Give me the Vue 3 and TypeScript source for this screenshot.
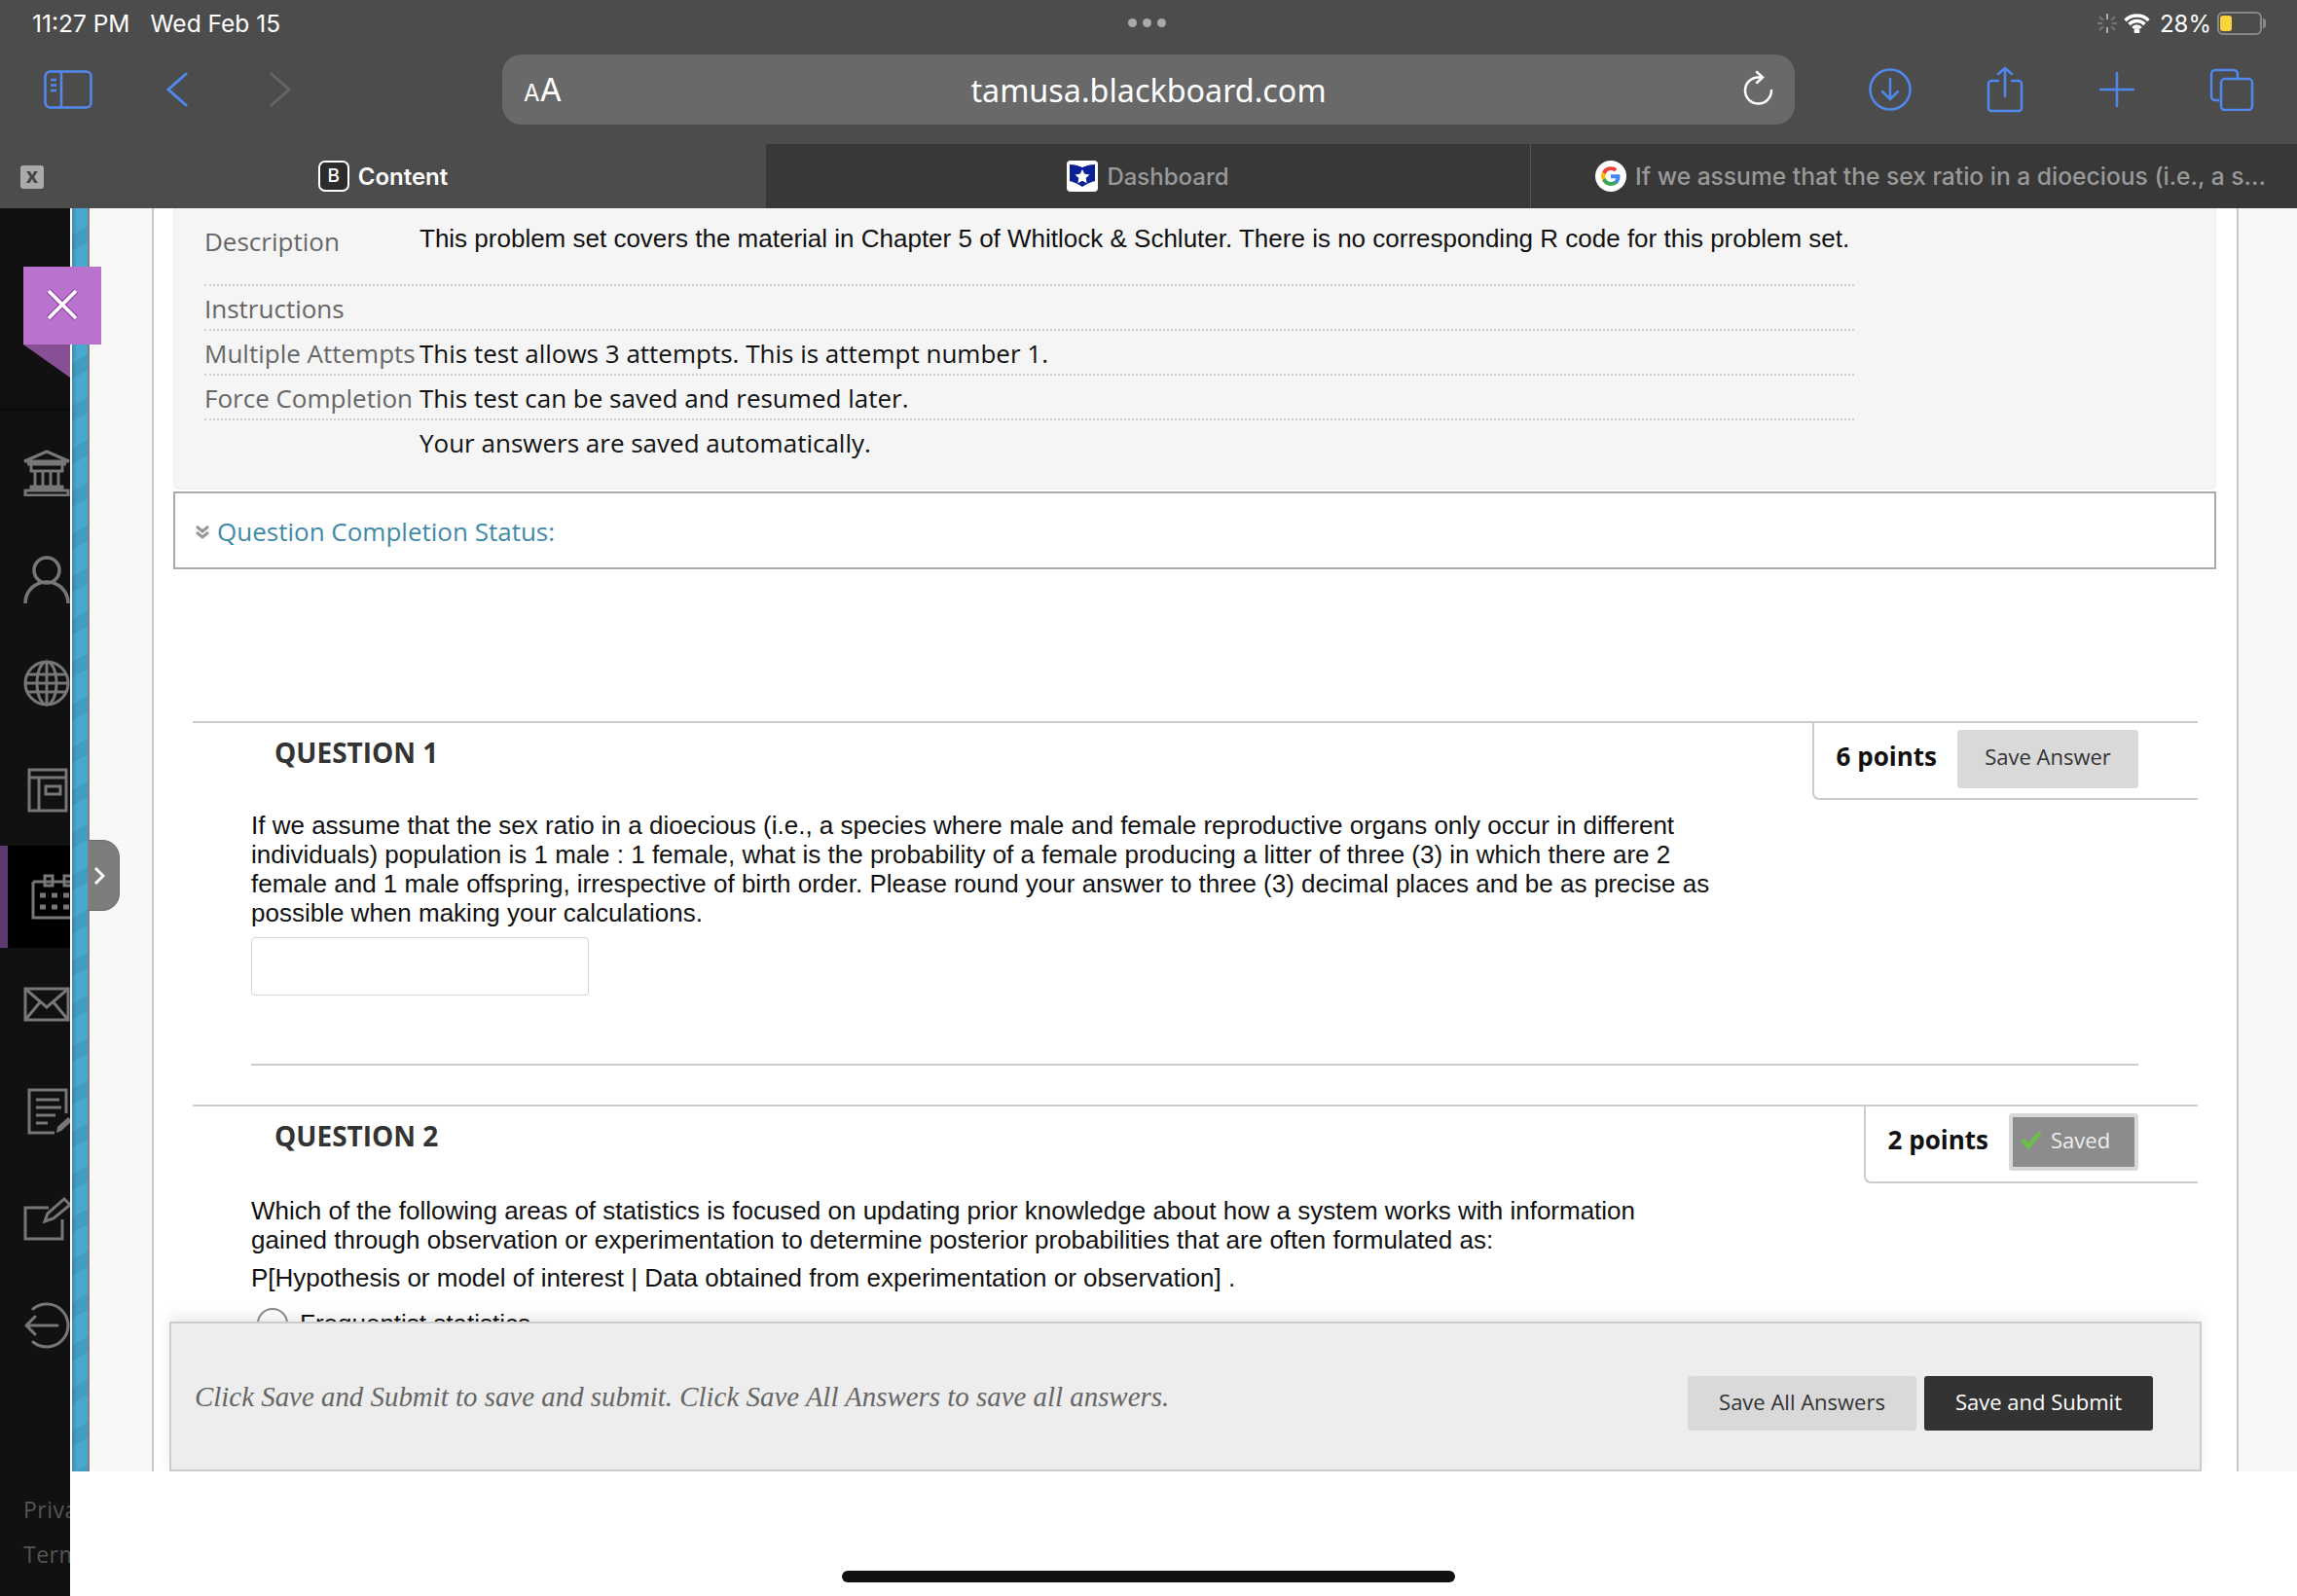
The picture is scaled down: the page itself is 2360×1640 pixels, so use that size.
<script setup lang="ts">
const rows = [
  { label: 'Description', value: 'This problem set covers the material in Chapter 5 of Whitlock & Schluter. There is no corresponding R code for this problem set.', cls: 'first' },
  { label: 'Instructions', value: '', cls: '' },
  { label: 'Multiple Attempts', value: 'This test allows 3 attempts. This is attempt number 1.', cls: '' },
  { label: 'Force Completion', value: 'This test can be saved and resumed later.', cls: '' },
  { label: '', value: 'Your answers are saved automatically.', cls: 'last' }
]
</script>

<template>
  <div class="app">
    <header class="chrome">
      <div class="status">
        <span class="time">11:27 PM</span>
        <span class="date">Wed Feb 15</span>
        <span class="dots"><i></i><i></i><i></i></span>
        <span class="status-right">
          <svg class="spin" width="20" height="22" viewBox="0 0 20 22" stroke="#aaa" stroke-width="2">
            <path d="M10 1v6M10 15v6" /><path d="M2 4l4 4M14 14l4 4M18 4l-4 4M6 14l-4 4M0 11h5M15 11h5" stroke="#777" />
          </svg>
          <svg class="wifi" width="27" height="20" viewBox="0 0 27 20" fill="none" stroke="#fff" stroke-width="3.500">
            <path d="M1.500 7a17 17 0 0 1 24 0M5.500 11a11 11 0 0 1 16 0M9.500 15a5 5 0 0 1 8 0" />
            <circle cx="13.500" cy="18" r="1.200" fill="#fff" />
          </svg>
          <span class="pct">28%</span>
          <span class="battery"><b></b></span>
          <span class="nub"></span>
        </span>
      </div>
      <div class="toolbar">
        <svg class="ic-side" width="50" height="40" viewBox="0 0 50 40" fill="none" stroke="#5188ee" stroke-width="2.500">
          <rect x="1.500" y="1.500" width="47" height="37" rx="5" />
          <path d="M18 2v36" /><path d="M7 10h6M7 15.500h6M7 21h6" />
        </svg>
        <svg class="ic-back" width="22" height="36" viewBox="0 0 22 36" fill="none" stroke="#5188ee" stroke-width="3" stroke-linecap="round">
          <path d="M20 2L2 18l18 16" />
        </svg>
        <svg class="ic-fwd" width="22" height="36" viewBox="0 0 22 36" fill="none" stroke="#666" stroke-width="3" stroke-linecap="round">
          <path d="M2 2l18 16L2 34" />
        </svg>
        <div class="urlbar">
          <span class="aa"><small>A</small>A</span>
          <span class="url">tamusa.blackboard.com</span>
          <svg class="reload" width="32" height="38" viewBox="0 0 32 38" fill="none" stroke="#fff" stroke-width="2.500" stroke-linecap="round">
            <path d="M29 21a13.500 13.500 0 1 1-13.500-13.500h3" /><path d="M14 2l6 5.500-6 5.500" />
          </svg>
        </div>
        <svg class="ic-dl" width="44" height="44" viewBox="0 0 44 44" fill="none" stroke="#5188ee" stroke-width="2.500" stroke-linecap="round">
          <circle cx="22" cy="22" r="20.500" /><path d="M22 11v21M14 24l8 8 8-8" />
        </svg>
        <svg class="ic-share" width="38" height="48" viewBox="0 0 38 48" fill="none" stroke="#5188ee" stroke-width="2.500" stroke-linecap="round">
          <path d="M12 15H5a3 3 0 0 0-3 3v25a3 3 0 0 0 3 3h28a3 3 0 0 0 3-3V18a3 3 0 0 0-3-3h-7" /><path d="M19 31V2M12 8l7-6 7 6" />
        </svg>
        <svg class="ic-plus" width="36" height="36" viewBox="0 0 36 36" stroke="#5188ee" stroke-width="2.500" stroke-linecap="round">
          <path d="M18 1v34M1 18h34" />
        </svg>
        <svg class="ic-tabs" width="46" height="44" viewBox="0 0 46 44" fill="none" stroke="#5188ee" stroke-width="2.500">
          <path d="M10 33H6a4 4 0 0 1-4-4V6a4 4 0 0 1 4-4h19a4 4 0 0 1 4 4v4" />
          <rect x="12" y="11" width="32" height="32" rx="4" />
        </svg>
      </div>
      <div class="tabs">
        <div class="tab active">
          <span class="tab-x">x</span>
          <span class="fav-b">B</span>
          <span class="tab-title">Content</span>
        </div>
        <div class="tab mid">
          <svg class="fav" width="32" height="32" viewBox="0 0 32 32">
            <rect width="32" height="32" rx="4" fill="#fff" />
            <path d="M3 4c4 0 9 1 13 3 4-2 9-3 13-3v17c-4 1-9 3-13 6-4-3-9-5-13-6z" fill="#0b1f96" />
            <path d="M16 9l2.300 4.800 5.200.700-3.800 3.600.9 5.200-4.600-2.500-4.600 2.500.9-5.200-3.800-3.600 5.200-.700z" fill="#fff" />
          </svg>
          <span class="tab-title dim">Dashboard</span>
        </div>
        <div class="tab last">
          <svg class="fav" width="32" height="32" viewBox="0 0 32 32">
            <circle cx="16" cy="16" r="16" fill="#fff" />
            <path d="M25.500 16.300c0-.7-.1-1.400-.2-2H16v3.900h5.300a4.500 4.500 0 0 1-2 3v2.500h3.200c1.900-1.700 3-4.300 3-7.400z" fill="#4285f4" />
            <path d="M16 26c2.700 0 4.900-.9 6.500-2.400l-3.200-2.500c-.9.600-2 .9-3.300.9-2.500 0-4.700-1.700-5.500-4H7.200v2.600A10 10 0 0 0 16 26z" fill="#34a853" />
            <path d="M10.500 18c-.2-.6-.3-1.300-.3-2s.1-1.400.3-2v-2.600H7.200a10 10 0 0 0 0 9.200z" fill="#fbbc05" />
            <path d="M16 10c1.400 0 2.700.5 3.700 1.400l2.800-2.800A10 10 0 0 0 7.200 11.400l3.300 2.600c.8-2.300 3-4 5.500-4z" fill="#ea4335" />
          </svg>
          <span class="tab-title dim long">If we assume that the sex ratio in a dioecious (i.e., a s...</span>
        </div>
      </div>
    </header>

    <div class="body">
      <aside class="rail">
        <div class="rail-top"></div>
        <nav class="rail-nav">
          <div class="rail-item">
            <svg width="48" height="48" viewBox="0 0 48 48" fill="none" stroke="#777" stroke-width="3">
              <path d="M1 12L24 2l23 10zM4 15h40M8 16v6h32v-6M12 22v16M20 22v16M28 22v16M36 22v16M8 38h32v3H8zM2 42h44v5H2z" />
            </svg>
          </div>
          <div class="rail-item">
            <svg width="48" height="50" viewBox="0 0 48 50" fill="none" stroke="#777" stroke-width="3.500">
              <circle cx="24" cy="15" r="13" /><path d="M2 49c0-13 10-22 22-22s22 9 22 22" />
            </svg>
          </div>
          <div class="rail-item globe">
            <svg width="48" height="48" viewBox="0 0 48 48" fill="none" stroke="#777" stroke-width="3">
              <circle cx="24" cy="24" r="22" /><ellipse cx="24" cy="24" rx="10" ry="22" /><path d="M24 2v44M4 15h40M2 24h44M4 33h40" />
            </svg>
          </div>
          <div class="rail-item">
            <svg class="ml4" width="42" height="46" viewBox="0 0 42 46" fill="none" stroke="#777" stroke-width="3">
              <path d="M2 2h38v42H2zM2 10h38M12 10v34M19 19h15v8H19z" />
            </svg>
          </div>
          <div class="rail-item active">
            <svg class="ml8" width="48" height="47" viewBox="0 0 48 47" fill="none" stroke="#777" stroke-width="3">
              <path d="M2 8h46M2 8v37h46M14 2h8v10h-8zM34 2h8v10h-8z" />
              <path d="M9 22h6M21 22h6M33 22h6M9 34h6M21 34h6M33 34h6" stroke-width="5" />
            </svg>
          </div>
          <div class="rail-item">
            <svg width="48" height="36" viewBox="0 0 48 36" fill="none" stroke="#777" stroke-width="3">
              <path d="M2 2h44v32H2zM2 2l22 19L46 2M2 34l15-18M46 34L31 16" />
            </svg>
          </div>
          <div class="rail-item">
            <svg class="ml4" width="46" height="48" viewBox="0 0 46 48" fill="none" stroke="#777" stroke-width="3">
              <path d="M40 26V2H2v44h26" /><path d="M9 12h24M9 20h26M9 28h20M9 36h12" />
              <path d="M30 46l1-6 11-10 4 4-11 10z" fill="#777" stroke="none" />
            </svg>
          </div>
          <div class="rail-item">
            <svg width="48" height="46" viewBox="0 0 48 46" fill="none" stroke="#777" stroke-width="3">
              <path d="M26 12H2v32h38V24" /><path d="M22 26l3-8L42 3l6 6-17 14z" />
            </svg>
          </div>
          <div class="rail-item">
            <svg width="48" height="48" viewBox="0 0 48 48" fill="none" stroke="#777" stroke-width="3" stroke-linecap="round">
              <path d="M3 24h32M12 15l-9 9 9 9" /><path d="M10 7a22 22 0 1 1 0 34" />
            </svg>
          </div>
        </nav>
        <div class="rail-foot">
          <div>Privacy</div>
          <div>Terms</div>
        </div>
      </aside>

      <div class="right">
        <div class="page">
          <div class="strip"></div>
          <div class="gutter"></div>
          <main class="content">
            <section class="info">
              <div v-for="r in rows" :key="r.value + r.label" class="info-row" :class="r.cls">
                <div class="info-label">{{ r.label }}</div>
                <div class="info-value">{{ r.value }}</div>
              </div>
            </section>
            <div class="completion">
              <svg width="16" height="16" viewBox="0 0 16 16" fill="none" stroke="#999" stroke-width="3">
                <path d="M2 3l6 5 6-5M2 9l6 5 6-5" />
              </svg>
              <span>Question Completion Status:</span>
            </div>

            <section class="question q1">
              <div class="q-head">
                <h2>QUESTION 1</h2>
                <div class="points">
                  <strong>6 points</strong>
                  <button class="save">Save Answer</button>
                </div>
              </div>
              <div class="q-body">
                <p>If we assume that the sex ratio in a dioecious (i.e., a species where male and female reproductive organs only occur in different individuals) population is 1 male : 1 female, what is the probability of a female producing a litter of three (3) in which there are 2 female and 1 male offspring, irrespective of birth order. Please round your answer to three (3) decimal places and be as precise as possible when making your calculations.</p>
                <input class="answer" type="text" />
                <div class="q-rule"></div>
              </div>
            </section>

            <section class="question q2">
              <div class="q-head">
                <h2>QUESTION 2</h2>
                <div class="points">
                  <strong>2 points</strong>
                  <button class="saved">
                    <svg width="22" height="20" viewBox="0 0 22 20" fill="none" stroke="#6cc04a" stroke-width="4.500">
                      <path d="M2 10l6 7L20 3" />
                    </svg>
                    Saved
                  </button>
                </div>
              </div>
              <div class="q-body q2-body">
                <p>Which of the following areas of statistics is focused on updating prior knowledge about how a system works with information gained through observation or experimentation to determine posterior probabilities that are often formulated as:</p>
                <p class="formula">P[Hypothesis or model of interest | Data obtained from experimentation or observation] .</p>
                <label class="option"><span class="radio"></span>Frequentist statistics</label>
              </div>
            </section>

            <div class="submit-bar">
              <em>Click Save and Submit to save and submit. Click Save All Answers to save all answers.</em>
              <div class="submit-actions">
                <button class="btn light">Save All Answers</button>
                <button class="btn dark">Save and Submit</button>
              </div>
            </div>
          </main>
          <div class="gutter-right"></div>
          <div class="close-flag">
            <svg width="36" height="36" viewBox="0 0 36 36" stroke="#fff" stroke-width="3.500">
              <path d="M4 4l28 28M32 4L4 32" stroke="#9a4fb0" stroke-width="6.500" /><path d="M4 4l28 28M32 4L4 32" />
            </svg>
          </div>
          <div class="flag-fold"></div>
          <div class="handle">
            <svg width="12" height="20" viewBox="0 0 12 20" fill="none" stroke="#fff" stroke-width="3">
              <path d="M2 2l8 8-8 8" />
            </svg>
          </div>
        </div>
        <footer class="foot"><div class="home"></div></footer>
      </div>
    </div>
  </div>
</template>

<style>
html, body { margin: 0; background: #fff; }
</style>

<style scoped>
.app { width: 2360px; height: 1640px; overflow: hidden; display: flex; flex-direction: column; font-family: "Open Sans", "Liberation Sans", sans-serif; }
.chrome { background: #4c4c4c; height: 214px; flex: none; color: #fff; font-family: Inter, "Liberation Sans", sans-serif; }
.status { height: 48px; display: flex; align-items: center; padding: 0 32px 0 33px; font-size: 24.500px; position: relative; }
.date { margin-left: 21px; }
.dots { position: absolute; left: 1159px; top: 19px; display: flex; gap: 6px; }
.dots i { width: 9px; height: 9px; border-radius: 50%; background: #a9a9a9; }
.status-right { margin-left: auto; display: flex; align-items: center; }
.wifi { margin-left: 7px; }
.pct { margin-left: 10px; font-size: 24px; }
.battery { margin-left: 6px; width: 46px; height: 24px; box-sizing: border-box; border: 2px solid #888; border-radius: 6px; padding: 2px 1px; display: block; }
.battery b { display: block; width: 12px; height: 16px; background: #f8d33c; border-radius: 3px; }
.nub { width: 3px; height: 10px; background: #888; border-radius: 0 3px 3px 0; margin-left: 1px; }
.toolbar { height: 100px; box-sizing: border-box; padding-bottom: 12px; display: flex; align-items: center; position: relative; }
.ic-side { margin-left: 45px; }
.ic-back { margin-left: 76px; }
.ic-fwd { margin-left: 84px; }
.urlbar { margin-left: 217px; width: 1328px; height: 72px; background: #696969; border-radius: 20px; display: flex; align-items: center; position: relative; }
.aa { margin-left: 22px; font-size: 33px; line-height: 1; }
.aa small { font-size: 24px; }
.url { position: absolute; left: 0; right: 0; text-align: center; font-size: 32.300px; color: #fff; font-family: "Noto Sans", sans-serif; }
.reload { position: absolute; left: 1275px; top: 16px; }
.ic-dl { margin-left: 76px; }
.ic-share { margin-left: 77px; }
.ic-plus { margin-left: 78px; }
.ic-tabs { margin-left: 77px; }
.tabs { height: 66px; display: flex; background: #383838; }
.tab { display: flex; align-items: center; justify-content: center; position: relative; font-size: 24px; }
.tab.active { width: 787px; background: #4c4c4c; font-weight: 600; }
.tab.mid { width: 785px; }
.tab.last { width: 788px; padding-left: 34px; border-left: 1px solid #555; box-sizing: border-box; }
.tab-x { position: absolute; left: 21px; top: 22px; width: 24px; height: 24px; background: #aaa; border-radius: 3px; color: #444; text-align: center; line-height: 21px; font-size: 22px; font-weight: 700; }
.fav-b { width: 32px; height: 32px; box-sizing: border-box; border: 2px solid #fff; border-radius: 7px; background: #2c2c2c; text-align: center; line-height: 27px; font-size: 19px; font-weight: 500; }
.tab-title { margin-left: 9px; }
.dim { color: #999; font-weight: 500; }
.long { font-size: 24.600px; white-space: nowrap; }
.fav { flex: none; }

.body { flex: 1; display: flex; min-height: 0; }
.rail { width: 72px; flex: none; background: #111; overflow: hidden; display: flex; flex-direction: column; position: relative; }
.rail-top { height: 205px; flex: none; border-bottom: 3px solid #0b0b0b; }
.rail-nav { margin-top: 9px; }
.rail-item { height: 110px; display: flex; align-items: center; padding-left: 24px; box-sizing: border-box; width: 120px; }
.rail-item.globe { margin-top: -4px; }
.rail-item.active { background: #000; height: 105px; margin: 2px 0 3px; border-left: 8px solid #5f3a6e; padding-left: 16px; }
.ml4 { margin-left: 4px; }
.ml8 { margin-left: 8px; }
.rail-foot { margin-top: auto; padding: 0 0 20px 24px; color: #555; font-size: 23px; letter-spacing: .5px; white-space: nowrap; line-height: 46px; }
.right { flex: 1; display: flex; flex-direction: column; min-width: 0; }
.page { height: 1298px; flex: none; display: flex; position: relative; background: #fff; }
.strip { width: 18px; margin-left: 2px; flex: none; box-sizing: border-box; border-right: 2px solid #808080; background: linear-gradient(90deg, rgba(0,0,0,.14), rgba(0,0,0,0) 35%), repeating-linear-gradient(150deg, #4aa8cf 0 24px, #439dc2 24px 38px); }
.gutter { width: 64px; flex: none; background: #f8f8f8; border-right: 2px solid #c8c8c8; }
.gutter-right { flex: 1; background: #f8f8f8; border-left: 2px solid #c8c8c8; }
.content { width: 2140px; flex: none; background: #fff; position: relative; overflow: hidden; padding: 0 21px 0 20px; box-sizing: border-box; }
.info { background: #f5f5f5; height: 289px; box-sizing: border-box; padding: 0 31px; border: 1px solid #eee; border-top: 0; border-radius: 0 0 6px 6px; }
.info-row { display: grid; grid-template-columns: 221px 1fr; width: 1695px; height: 46px; padding-top: 2px; border-bottom: 2px dotted #ccc; box-sizing: border-box; align-items: center; font-size: 26px; }
.info-row.first { height: 80px; align-items: start; padding-top: 16px; }
.info-row.last { border-bottom: 0; padding-top: 0; }
.info-label { color: #666; white-space: nowrap; }
.info-value { color: #111; white-space: nowrap; }
.first .info-value { font-family: "Liberation Sans", sans-serif; font-size: 26px; }
.completion { margin-top: 2px; height: 80px; border: 2px solid #aaa; box-sizing: border-box; display: flex; align-items: center; padding: 2px 0 0 20px; gap: 7px; font-size: 26px; color: #3f8aa8; }
.question { margin-left: 20px; width: 2060px; }
.q1 { margin-top: 156px; }
.q-head { height: 92px; border-top: 2px solid #ccc; box-sizing: border-box; display: flex; justify-content: space-between; align-items: flex-start; }
.q-head h2 { margin: 10px 0 0 84px; font-size: 28px; line-height: 40px; font-weight: 700; color: #333; }
.points { height: 79px; box-sizing: border-box; border-left: 2px solid #ccc; border-bottom: 2px solid #ccc; border-radius: 0 0 0 7px; padding: 7px 61px 0 23px; display: flex; align-items: flex-start; gap: 21px; }
.points strong { font-size: 26px; line-height: 50px; margin-top: 2px; color: #111; white-space: nowrap; }
.save, .saved, .btn { font-family: inherit; font-size: 22px; border: 0; border-radius: 3px; padding: 0; cursor: pointer; }
.save { width: 186px; height: 60px; background: #d9d9d9; color: #333; padding-bottom: 6px; }
.saved { width: 133px; height: 59px; background: #8c8c8c; border: 4px solid #d9d9d9; color: #eee; display: flex; align-items: center; justify-content: flex-start; gap: 9px; box-sizing: border-box; padding: 0 0 5px 8px; }
.q-body { padding-left: 60px; font-family: "Liberation Sans", sans-serif; font-size: 26px; line-height: 30px; color: #111; }
.q2-body { padding-top: 2px; }
.q-body p { margin: 0; width: 1502px; }
.answer { display: block; width: 347px; height: 60px; box-sizing: border-box; margin-top: 10px; border: 1px solid #d4d4d4; border-radius: 4px; background: #fff; }
.q-rule { margin-top: 70px; height: 2px; background: #ccc; width: 1939px; margin-bottom: 40px; }
.q-body .formula { margin-top: 9px; }
.option { display: flex; align-items: center; margin-top: 16px; padding-left: 6px; gap: 12px; }
.radio { width: 32px; height: 32px; box-sizing: border-box; border: 2px solid #888; border-radius: 50%; }
.submit-bar { position: absolute; left: 16px; right: 36px; top: 1144px; height: 154px; box-sizing: border-box; background: #ededed; border: 2px solid #ccc; box-shadow: 0 -6px 12px rgba(0,0,0,.08); display: flex; align-items: flex-start; padding: 54px 48px 0 24px; justify-content: space-between; }
.submit-bar em { font-family: "Liberation Serif", serif; font-size: 28.900px; color: #666; line-height: 36px; margin-top: 3px; white-space: nowrap; }
.submit-actions { display: flex; gap: 8px; }
.btn { width: 235px; height: 56px; padding-bottom: 4px; }
.btn.light { background: #d9d9d9; color: #333; }
.btn.dark { background: #333; color: #fff; }
.close-flag { position: absolute; left: -48px; top: 60px; width: 80px; height: 80px; box-sizing: border-box; padding-bottom: 3px; background: #b973cc; display: flex; align-items: center; justify-content: center; }
.flag-fold { position: absolute; left: -48px; top: 140px; width: 48px; height: 34px; background: #884f95; clip-path: polygon(0 0, 100% 0, 100% 100%); }
.handle { position: absolute; left: 19px; top: 649px; width: 32px; height: 73px; background: #7d7d7d; border: 1px solid #6c6c6c; border-left: 0; border-radius: 0 18px 18px 0; display: flex; align-items: center; justify-content: center; padding: 0 9px 0 0; box-sizing: border-box; }
.foot { flex: 1; background: #fff; display: flex; justify-content: center; align-items: flex-end; padding-right: 72px; }
.home { width: 630px; height: 12px; border-radius: 6px; background: #111; margin-bottom: 14px; }
</style>
